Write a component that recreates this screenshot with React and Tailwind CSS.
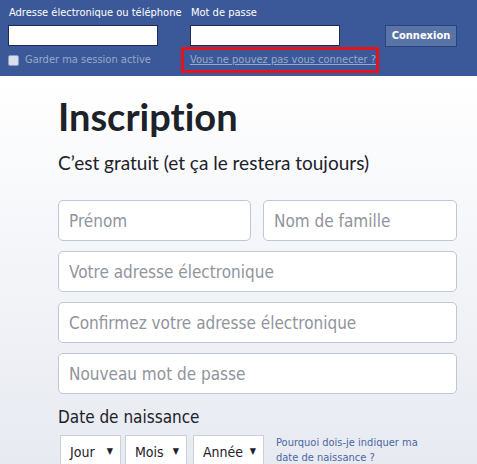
import React from 'react';

const tahoma = { fontFamily: '"DejaVu Sans Condensed", "DejaVu Sans", sans-serif' };
const freight = { fontFamily: 'Lato, "Open Sans", sans-serif' };

function Field({ placeholder, className = '' }) {
  return (
    <input
      type="text"
      placeholder={placeholder}
      style={tahoma}
      className={`h-[41px] rounded-[5px] border border-[#bdc7d8] bg-white px-[10px] text-[17px] text-[#1d2129] placeholder:text-[#90949c] outline-none ${className}`}
    />
  );
}

function DateSelect({ label, width }) {
  return (
    <div
      style={tahoma}
      className={`flex h-[34px] items-center justify-between border border-[#ccd0d5] bg-white pl-[9px] pr-[7px] text-[14px] text-[#1d2129] ${width}`}
    >
      <span>{label}</span>
      <span className="text-[9px]">▼</span>
    </div>
  );
}

export default function App() {
  return (
    <div className="h-[464px] w-[477px] overflow-hidden bg-white">
      {/* Top login bar */}
      <div style={tahoma} className="flex h-[76px] bg-[#3b5998] pl-[8px] pt-[6px] text-[11px]">
        <div className="flex w-[182px] flex-col">
          <label className="pl-px leading-[14px] text-white">Adresse électronique ou téléphone</label>
          <input type="text" className="mt-[5px] h-[21px] w-[150px] border border-[#1d2a5b] bg-white outline-none" />
          <div className="mt-[6px] flex items-center gap-[6px]">
            <span className="h-[11px] w-[11px] rounded-[2px] border border-[#8b9dc3] bg-[#d8dfea]" />
            <span className="text-[#98a9ca]">Garder ma session active</span>
          </div>
        </div>
        <div className="flex w-[195px] flex-col">
          <label className="pl-px leading-[14px] text-white">Mot de passe</label>
          <input type="password" className="mt-[5px] h-[21px] w-[150px] border border-[#1d2a5b] bg-white outline-none" />
          <div className="mt-px -ml-[9px] flex h-[26px] w-[198px] items-center overflow-hidden whitespace-nowrap border-[3px] border-[#e5141b] pl-[6px]">
            <a href="#" className="text-[11px] text-[#98a9ca] underline">Vous ne pouvez pas vous connecter ?</a>
          </div>
        </div>
        <div className="pt-[19px]">
          <button className="h-[22px] w-[72px] border border-[#29447e] bg-[#5b74a8] text-[11px] font-bold text-white">
            Connexion
          </button>
        </div>
      </div>

      {/* Sign up */}
      <div className="h-[388px] bg-gradient-to-b from-white to-[#e7eaf1] pl-[58px] pr-[20px] pt-[17px]">
        <h1 style={freight} className="text-[38px] font-bold leading-[46px] text-[#1d2129] [font-variant-ligatures:none]">Inscription</h1>
        <p style={freight} className="mt-[12px] text-[19px] leading-[24px] text-[#1d2129] [font-variant-ligatures:none]">
          C’est gratuit (et ça le restera toujours)
        </p>
        <div className="mt-[25px] flex w-[399px] flex-col gap-[10px]">
          <div className="flex gap-[12px]">
            <Field placeholder="Prénom" className="w-[193px]" />
            <Field placeholder="Nom de famille" className="w-[194px]" />
          </div>
          <Field placeholder="Votre adresse électronique" className="w-full" />
          <Field placeholder="Confirmez votre adresse électronique" className="w-full" />
          <Field placeholder="Nouveau mot de passe" className="w-full" />
        </div>
        <div style={tahoma} className="mt-[12px] text-[17px] leading-[22px] text-[#1d2129]">Date de naissance</div>
        <div className="mt-[7px] flex items-start pl-[2px]">
          <DateSelect label="Jour" width="w-[61px]" />
          <div className="w-[4px]" />
          <DateSelect label="Mois" width="w-[62px]" />
          <div className="w-[6px]" />
          <DateSelect label="Année" width="w-[71px]" />
          <a href="#" style={tahoma} className="ml-[12px] text-[11px] leading-[15px] text-[#4b67a1]">
            Pourquoi dois-je indiquer ma<br />date de naissance ?
          </a>
        </div>
      </div>
    </div>
  );
}
